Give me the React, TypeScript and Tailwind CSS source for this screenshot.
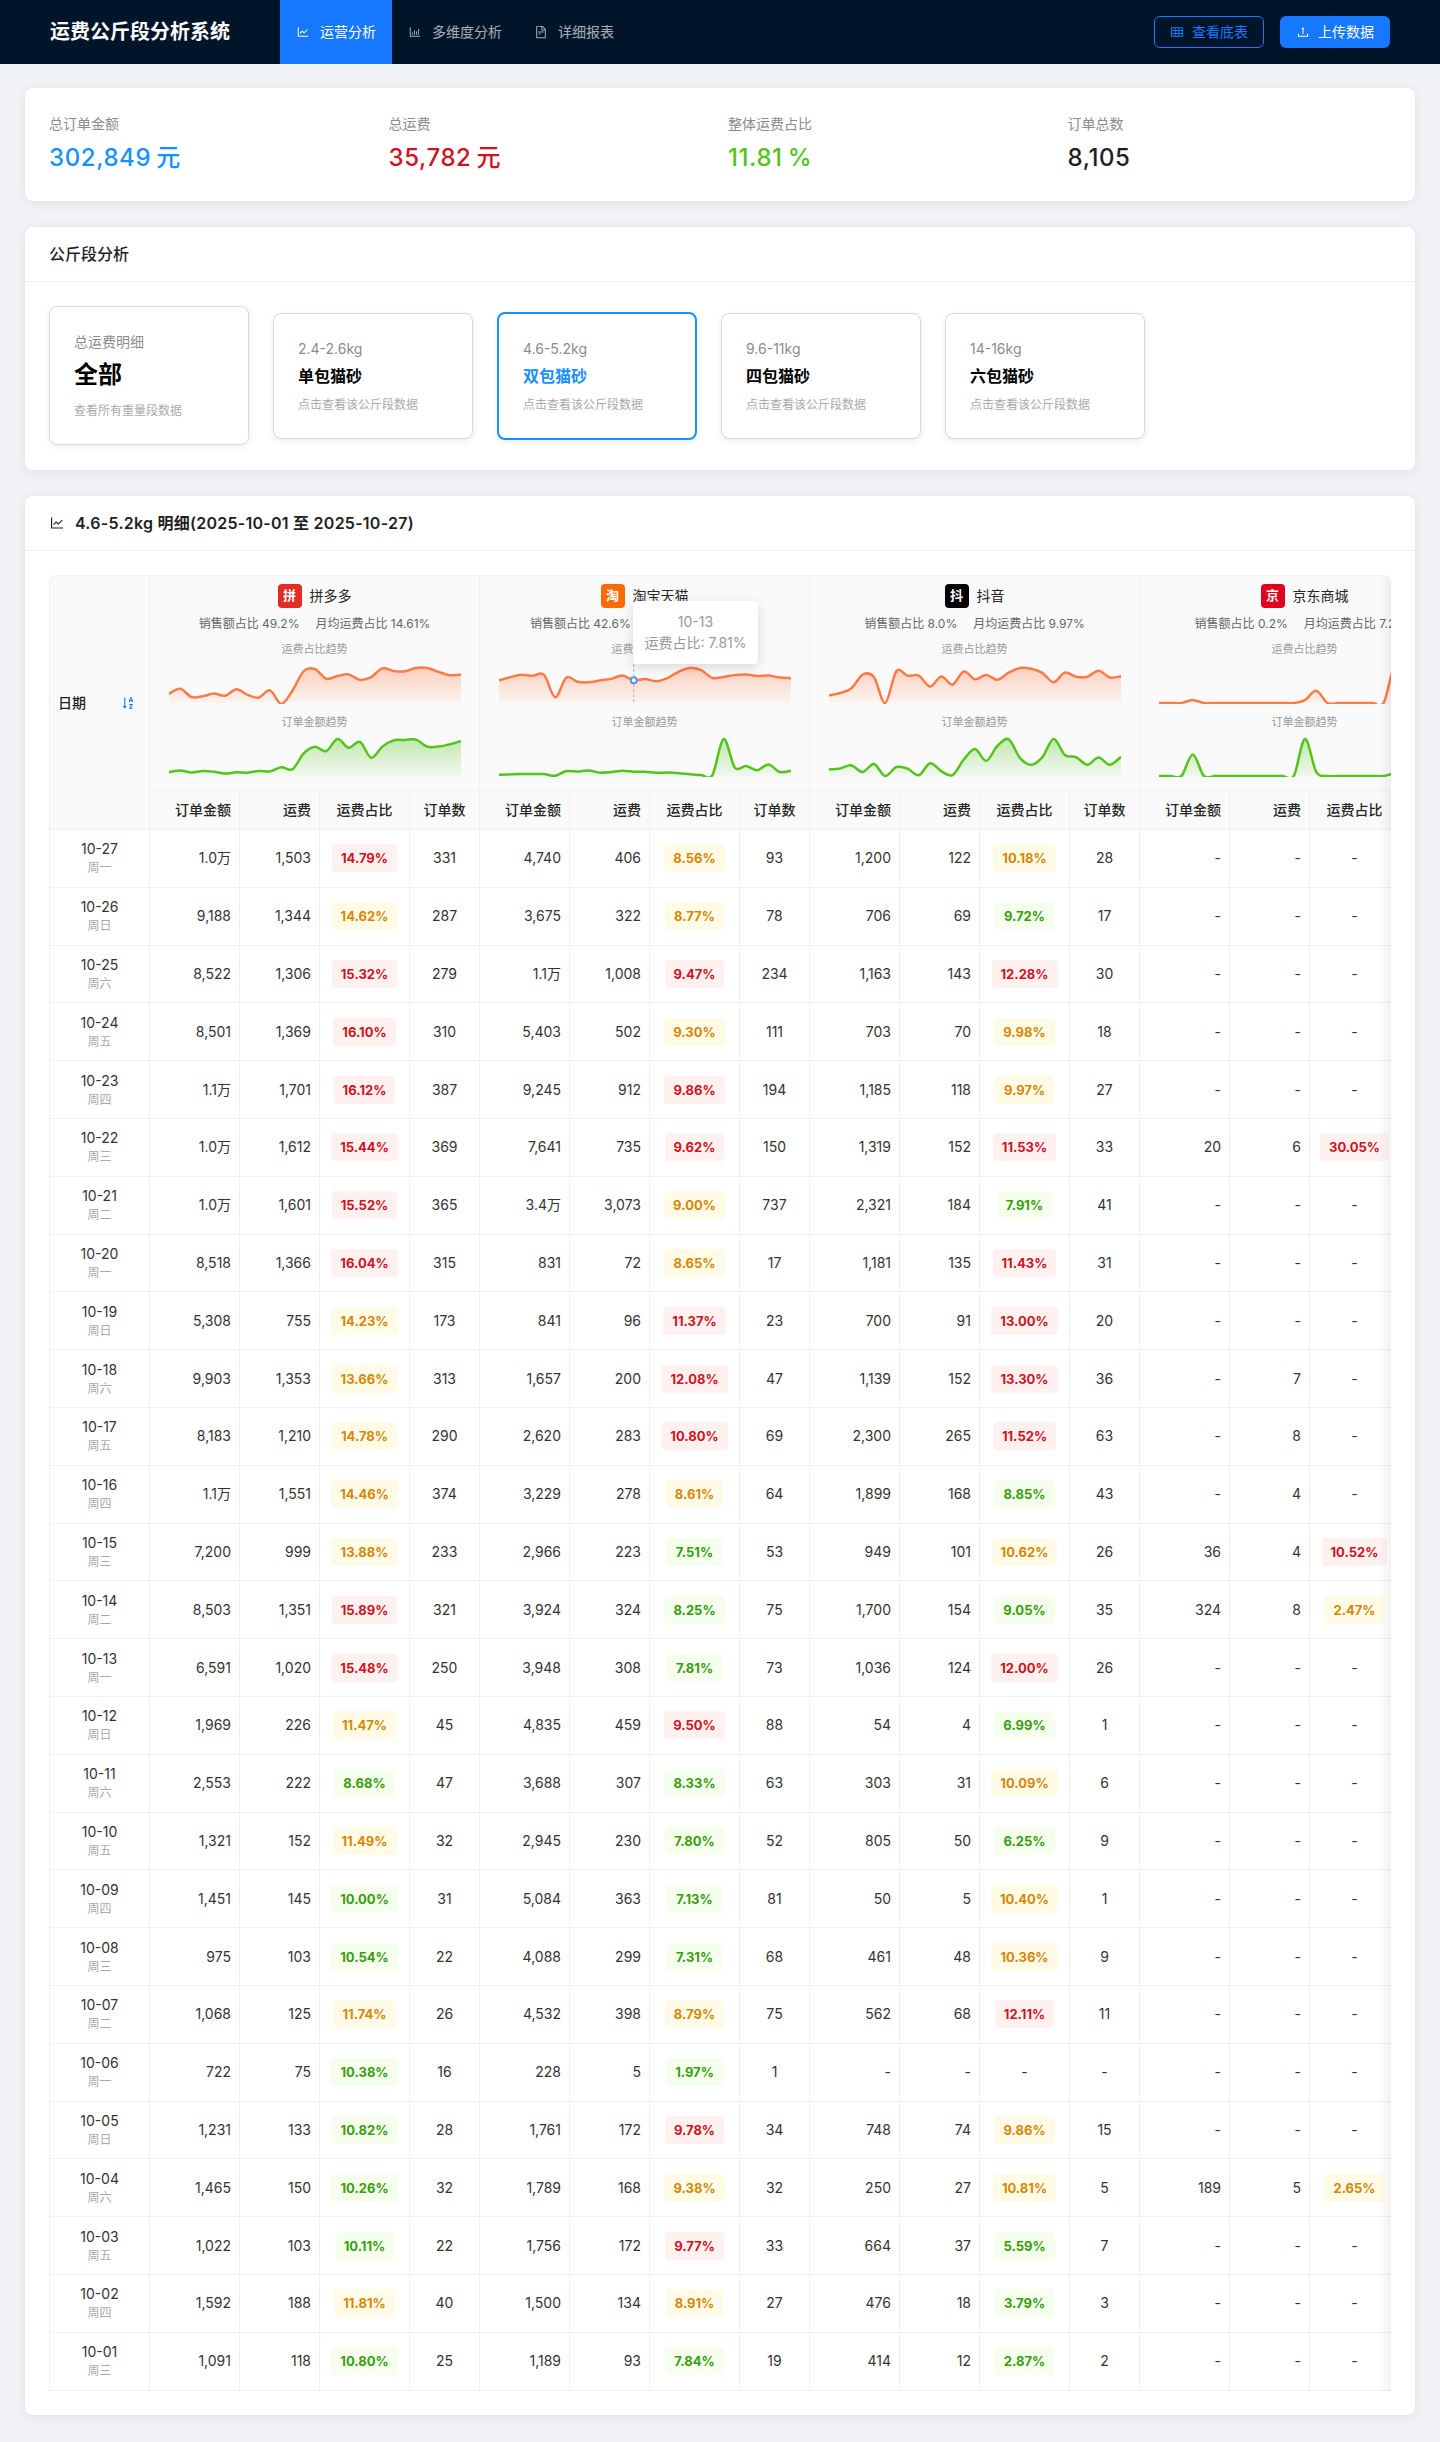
import {
  AiOutlineBarChart,
  AiOutlineFileText,
  AiOutlineLineChart,
  AiOutlineSortAscending,
  AiOutlineTable,
  AiOutlineUpload,
} from 'react-icons/ai'

type Cell = [number | null, number | null, number | null, number | null]
type Row = { date: string; week: string; cells: [Cell, Cell, Cell, Cell] }

const NONE: Cell = [null, null, null, null]

const rows: Row[] = [
  { date: '10-27', week: '周一', cells: [[10162, 1503, 14.79, 331], [4740, 406, 8.56, 93], [1200, 122, 10.18, 28], NONE] },
  { date: '10-26', week: '周日', cells: [[9188, 1344, 14.62, 287], [3675, 322, 8.77, 78], [706, 69, 9.72, 17], NONE] },
  { date: '10-25', week: '周六', cells: [[8522, 1306, 15.32, 279], [10644, 1008, 9.47, 234], [1163, 143, 12.28, 30], NONE] },
  { date: '10-24', week: '周五', cells: [[8501, 1369, 16.1, 310], [5403, 502, 9.3, 111], [703, 70, 9.98, 18], NONE] },
  { date: '10-23', week: '周四', cells: [[10552, 1701, 16.12, 387], [9245, 912, 9.86, 194], [1185, 118, 9.97, 27], NONE] },
  { date: '10-22', week: '周三', cells: [[10440, 1612, 15.44, 369], [7641, 735, 9.62, 150], [1319, 152, 11.53, 33], [20, 6, 30.05, null]] },
  { date: '10-21', week: '周二', cells: [[10316, 1601, 15.52, 365], [34144, 3073, 9.0, 737], [2321, 184, 7.91, 41], NONE] },
  { date: '10-20', week: '周一', cells: [[8518, 1366, 16.04, 315], [831, 72, 8.65, 17], [1181, 135, 11.43, 31], NONE] },
  { date: '10-19', week: '周日', cells: [[5308, 755, 14.23, 173], [841, 96, 11.37, 23], [700, 91, 13.0, 20], NONE] },
  { date: '10-18', week: '周六', cells: [[9903, 1353, 13.66, 313], [1657, 200, 12.08, 47], [1139, 152, 13.3, 36], [null, 7, null, null]] },
  { date: '10-17', week: '周五', cells: [[8183, 1210, 14.78, 290], [2620, 283, 10.8, 69], [2300, 265, 11.52, 63], [null, 8, null, null]] },
  { date: '10-16', week: '周四', cells: [[10726, 1551, 14.46, 374], [3229, 278, 8.61, 64], [1899, 168, 8.85, 43], [null, 4, null, null]] },
  { date: '10-15', week: '周三', cells: [[7200, 999, 13.88, 233], [2966, 223, 7.51, 53], [949, 101, 10.62, 26], [36, 4, 10.52, null]] },
  { date: '10-14', week: '周二', cells: [[8503, 1351, 15.89, 321], [3924, 324, 8.25, 75], [1700, 154, 9.05, 35], [324, 8, 2.47, null]] },
  { date: '10-13', week: '周一', cells: [[6591, 1020, 15.48, 250], [3948, 308, 7.81, 73], [1036, 124, 12.0, 26], NONE] },
  { date: '10-12', week: '周日', cells: [[1969, 226, 11.47, 45], [4835, 459, 9.5, 88], [54, 4, 6.99, 1], NONE] },
  { date: '10-11', week: '周六', cells: [[2553, 222, 8.68, 47], [3688, 307, 8.33, 63], [303, 31, 10.09, 6], NONE] },
  { date: '10-10', week: '周五', cells: [[1321, 152, 11.49, 32], [2945, 230, 7.8, 52], [805, 50, 6.25, 9], NONE] },
  { date: '10-09', week: '周四', cells: [[1451, 145, 10.0, 31], [5084, 363, 7.13, 81], [50, 5, 10.4, 1], NONE] },
  { date: '10-08', week: '周三', cells: [[975, 103, 10.54, 22], [4088, 299, 7.31, 68], [461, 48, 10.36, 9], NONE] },
  { date: '10-07', week: '周二', cells: [[1068, 125, 11.74, 26], [4532, 398, 8.79, 75], [562, 68, 12.11, 11], NONE] },
  { date: '10-06', week: '周一', cells: [[722, 75, 10.38, 16], [228, 5, 1.97, 1], NONE, NONE] },
  { date: '10-05', week: '周日', cells: [[1231, 133, 10.82, 28], [1761, 172, 9.78, 34], [748, 74, 9.86, 15], NONE] },
  { date: '10-04', week: '周六', cells: [[1465, 150, 10.26, 32], [1789, 168, 9.38, 32], [250, 27, 10.81, 5], [189, 5, 2.65, null]] },
  { date: '10-03', week: '周五', cells: [[1022, 103, 10.11, 22], [1756, 172, 9.77, 33], [664, 37, 5.59, 7], NONE] },
  { date: '10-02', week: '周四', cells: [[1592, 188, 11.81, 40], [1500, 134, 8.91, 27], [476, 18, 3.79, 3], NONE] },
  { date: '10-01', week: '周三', cells: [[1091, 118, 10.8, 25], [1189, 93, 7.84, 19], [414, 12, 2.87, 2], NONE] },
]

const platforms = [
  { name: '拼多多', mark: '拼', logo: 'bg-[#e02e24]', share: '49.2%', avg: '14.61%', rateFloor: 8.87, low: 11, high: 14.79 },
  { name: '淘宝天猫', mark: '淘', logo: 'bg-[#ff6a00]', share: '42.6%', avg: '8.63%', rateFloor: 0, low: 8.5, high: 9.47 },
  { name: '抖音', mark: '抖', logo: 'bg-black', share: '8.0%', avg: '9.97%', rateFloor: 0, low: 9.8, high: 11.43 },
  { name: '京东商城', mark: '京', logo: 'bg-[#e1001f]', share: '0.2%', avg: '7.28%', rateFloor: 0, low: 2, high: 10 },
]

const segments = [
  { range: '2.4-2.6kg', name: '单包猫砂' },
  { range: '4.6-5.2kg', name: '双包猫砂', active: true },
  { range: '9.6-11kg', name: '四包猫砂' },
  { range: '14-16kg', name: '六包猫砂' },
]

const stats = [
  { label: '总订单金额', value: '302,849', suffix: '元', color: 'text-[#1890ff]' },
  { label: '总运费', value: '35,782', suffix: '元', color: 'text-[#cf1322]' },
  { label: '整体运费占比', value: '11.81', suffix: '%', color: 'text-[#52c41a]' },
  { label: '订单总数', value: '8,105', suffix: '', color: 'text-[#1f1f1f]' },
]

const money = (n: number | null) => {
  if (n == null) return '-'
  if (n >= 10000) return (n / 10000).toFixed(1) + '万'
  return n.toLocaleString('en-US')
}

function smoothPath(points: number[][]) {
  let d = `M${points[0][0]},${points[0][1]}`
  for (let i = 0; i < points.length - 1; i++) {
    const p0 = points[i - 1] ?? points[i]
    const p1 = points[i]
    const p2 = points[i + 1]
    const p3 = points[i + 2] ?? p2
    const c1x = p1[0] + (p2[0] - p0[0]) / 6
    const c1y = p1[1] + (p2[1] - p0[1]) / 6
    const c2x = p2[0] - (p3[0] - p1[0]) / 6
    const c2y = p2[1] - (p3[1] - p1[1]) / 6
    d += ` C${c1x},${c1y} ${c2x},${c2y} ${p2[0]},${p2[1]}`
  }
  return d
}

function Spark({
  id,
  values,
  floor,
  top,
  color,
  hover,
}: {
  id: string
  values: number[]
  floor: number
  top: number
  color: string
  hover?: number
}) {
  const base = 39
  const max = Math.max(...values)
  const x = (i: number) => (i * 292) / (values.length - 1)
  const y = (v: number) => base - ((v - floor) / (max - floor)) * (base - top)
  const points = values.map((v, i) => [x(i), y(v)])
  const line = smoothPath(points)
  return (
    <svg width="292" height="40" className="block">
      <defs>
        <linearGradient id={id} x1="0" y1="0" x2="0" y2="1">
          <stop offset="0%" stopColor={color} stopOpacity="0.34" />
          <stop offset="100%" stopColor={color} stopOpacity="0.04" />
        </linearGradient>
      </defs>
      <path d={`${line} L292,${base} L0,${base} Z`} fill={`url(#${id})`} />
      <path d={line} fill="none" stroke={color} strokeWidth="2.5" />
      {hover != null && (
        <>
          <line x1={x(hover)} x2={x(hover)} y1="0" y2={base} stroke="#b0b0b0" strokeWidth="1" strokeDasharray="3 2" />
          <circle cx={x(hover)} cy={y(values[hover])} r="3" fill="#fff" stroke="#5b8ff9" strokeWidth="2" />
        </>
      )}
    </svg>
  )
}

function RateBadge({ rate, low, high }: { rate: number; low: number; high: number }) {
  const tone =
    rate >= high
      ? 'bg-[#fff1f0] text-[#cf1322]'
      : rate >= low
        ? 'bg-[#fffbe6] text-[#d48806]'
        : 'bg-[#f6ffed] text-[#389e0d]'
  return (
    <span className={'inline-block h-7 rounded px-[9px] text-[13px] leading-7 font-bold whitespace-nowrap ' + tone}>
      {rate.toFixed(2)}%
    </span>
  )
}

function PlatformHead({ index }: { index: number }) {
  const p = platforms[index]
  const asc = [...rows].reverse()
  const rates = asc.map((r) => r.cells[index][2] ?? 0)
  const amounts = asc.map((r) => r.cells[index][0] ?? 0)
  return (
    <div className="flex h-[214px] flex-col items-center pt-2 font-normal">
      <div className="flex h-6 items-center gap-2">
        <span className={'flex h-6 w-6 items-center justify-center rounded text-[13px] font-bold text-white ' + p.logo}>
          {p.mark}
        </span>
        <span className="text-sm text-[#262626]">{p.name}</span>
      </div>
      <div className="mt-[6px] flex h-[19px] gap-4 text-xs leading-[19px] whitespace-nowrap text-[#666]">
        <span>销售额占比 {p.share}</span>
        <span>月均运费占比 {p.avg}</span>
      </div>
      <div className="mt-[8px] h-[17px] text-[11px] leading-[17px] text-[#999]">运费占比趋势</div>
      <div className="mt-[6px]">
        <Spark
          id={'rate' + index}
          values={rates}
          floor={p.rateFloor}
          top={4}
          color="#ff7a45"
          hover={index === 1 ? 12 : undefined}
        />
      </div>
      <div className="mt-[10px] h-[17px] text-[11px] leading-[17px] text-[#999]">订单金额趋势</div>
      <div className="mt-[6px]">
        <Spark id={'amount' + index} values={amounts} floor={0} top={2} color="#52c41a" />
      </div>
    </div>
  )
}

const th = 'border-r border-b border-[#f0f0f0] bg-[#fafafa] '
const td = 'border-r border-b border-[#f0f0f0] px-2 text-sm text-[#333] '

export default function App() {
  return (
    <div className="h-[2442px] overflow-hidden bg-[#f0f2f5] font-[Inter,'Noto_Sans_CJK_SC',sans-serif] antialiased">
      <header className="flex h-16 items-center bg-[#001529] px-[50px]">
        <h1 className="mr-[50px] text-xl font-semibold text-white">运费公斤段分析系统</h1>
        <nav className="flex h-full text-sm">
          <a className="flex items-center gap-[10px] bg-[#1677ff] px-4 text-white">
            <AiOutlineLineChart size={14} />
            运营分析
          </a>
          <a className="flex items-center gap-[10px] px-4 text-white/65">
            <AiOutlineBarChart size={14} />
            多维度分析
          </a>
          <a className="flex items-center gap-[10px] px-4 text-white/65">
            <AiOutlineFileText size={14} />
            详细报表
          </a>
        </nav>
        <div className="ml-auto flex gap-4 text-sm">
          <button className="flex h-8 w-[110px] items-center justify-center gap-2 rounded-md border border-[#1677ff] text-[#1677ff]">
            <AiOutlineTable size={14} />
            查看底表
          </button>
          <button className="flex h-8 w-[110px] items-center justify-center gap-2 rounded-md bg-[#1677ff] text-white">
            <AiOutlineUpload size={14} />
            上传数据
          </button>
        </div>
      </header>

      <main className="flex flex-col gap-[26px] px-[25px] pt-6">
        <section className="grid h-[113px] grid-cols-4 gap-4 rounded-lg bg-white px-6 pt-[25px] shadow-[0_2px_12px_rgba(0,0,0,0.08)]">
          {stats.map((s) => (
            <div key={s.label}>
              <div className="text-sm leading-[22px] text-[#8c8c8c]">{s.label}</div>
              <div className={'mt-[5px] text-2xl leading-9 font-medium tracking-[0.6px] ' + s.color}>
                {s.value}
                {s.suffix && <span className="ml-[5px]">{s.suffix}</span>}
              </div>
            </div>
          ))}
        </section>

        <section className="rounded-lg bg-white shadow-[0_2px_12px_rgba(0,0,0,0.08)]">
          <div className="flex h-[55px] items-center border-b border-[#f0f0f0] px-6 text-base font-medium text-[#1f1f1f]">
            公斤段分析
          </div>
          <div className="flex items-center gap-6 px-6 pt-6 pb-[25px]">
            <div className="h-[139px] w-[200px] rounded-lg border border-[#d9d9d9] p-6 shadow-[0_2px_6px_rgba(0,0,0,0.08)]">
              <div className="text-sm leading-[22px] text-[#8c8c8c]">总运费明细</div>
              <div className="mt-[6px] text-2xl leading-8 font-bold text-black">全部</div>
              <div className="mt-[10px] text-xs leading-[19px] text-[#aaa]">查看所有重量段数据</div>
            </div>
            {segments.map((s) => (
              <div
                key={s.range}
                className={
                  'w-[200px] rounded-lg bg-white p-6 shadow-[0_2px_6px_rgba(0,0,0,0.08)] ' +
                  (s.active ? 'border-2 border-[#1890ff]' : 'border border-[#d9d9d9]')
                }
              >
                <div className="text-sm leading-[22px] text-[#8c8c8c]">{s.range}</div>
                <div className={'mt-1 text-base leading-6 font-bold ' + (s.active ? 'text-[#1890ff]' : 'text-black')}>
                  {s.name}
                </div>
                <div className="mt-[7px] text-xs leading-[19px] text-[#aaa]">点击查看该公斤段数据</div>
              </div>
            ))}
          </div>
        </section>

        <section className="rounded-lg bg-white shadow-[0_2px_12px_rgba(0,0,0,0.08)]">
          <div className="flex h-[55px] items-center gap-[10px] border-b border-[#f0f0f0] px-6 text-base font-semibold tracking-[0.25px] text-[#1f1f1f]">
            <AiOutlineLineChart size={16} />
            4.6-5.2kg 明细(2025-10-01 至 2025-10-27)
          </div>
          <div className="p-6">
            <div className="relative overflow-hidden rounded-t-lg border-t border-l border-[#f0f0f0]">
              <table className="w-[1420px] table-fixed border-separate border-spacing-0">
                <colgroup>
                  <col className="w-[100px]" />
                  {platforms.map((p) => [
                    <col key={p.name + 'a'} className="w-[90px]" />,
                    <col key={p.name + 'b'} className="w-[80px]" />,
                    <col key={p.name + 'c'} className="w-[90px]" />,
                    <col key={p.name + 'd'} className="w-[70px]" />,
                  ])}
                </colgroup>
                <thead>
                  <tr className="h-[215px]">
                    <th rowSpan={2} className={th + 'px-2 text-left text-sm font-medium text-[#1f1f1f]'}>
                      <div className="flex items-center justify-between pr-[5px]">
                        日期
                        <AiOutlineSortAscending size={16} className="text-[#1677ff]" />
                      </div>
                    </th>
                    {platforms.map((p, i) => (
                      <th key={p.name} colSpan={4} className={th + 'align-top'}>
                        <PlatformHead index={i} />
                      </th>
                    ))}
                  </tr>
                  <tr className="h-[39px]">
                    {platforms.map((p) => [
                      <th key={p.name + 'a'} className={th + 'px-2 text-right text-sm font-medium text-[#262626]'}>订单金额</th>,
                      <th key={p.name + 'b'} className={th + 'px-2 text-right text-sm font-medium text-[#262626]'}>运费</th>,
                      <th key={p.name + 'c'} className={th + 'px-2 text-center text-sm font-medium text-[#262626]'}>运费占比</th>,
                      <th key={p.name + 'd'} className={th + 'px-2 text-center text-sm font-medium text-[#262626]'}>订单数</th>,
                    ])}
                  </tr>
                </thead>
                <tbody>
                  {rows.map((r) => (
                    <tr key={r.date} className="h-[57.8px]">
                      <td className={td + 'text-center'}>
                        <div className="leading-[19px]">{r.date}</div>
                        <div className="text-xs leading-[19px] text-[#aaa]">{r.week}</div>
                      </td>
                      {r.cells.map((c, i) => [
                        <td key={i + 'a'} className={td + 'text-right'}>{money(c[0])}</td>,
                        <td key={i + 'b'} className={td + 'text-right'}>{money(c[1])}</td>,
                        <td key={i + 'c'} className={td + 'text-center'}>
                          {c[2] == null ? '-' : <RateBadge rate={c[2]} low={platforms[i].low} high={platforms[i].high} />}
                        </td>,
                        <td key={i + 'd'} className={td + 'text-center'}>{c[3] ?? '-'}</td>,
                      ])}
                    </tr>
                  ))}
                </tbody>
              </table>
              <div className="absolute top-[25px] left-[583px] flex h-[63px] w-[125px] flex-col items-center justify-center gap-[3px] rounded bg-white text-sm leading-[18px] whitespace-nowrap text-[#999] shadow-[0_3px_12px_rgba(0,0,0,0.14)]">
                <div>10-13</div>
                <div>运费占比: 7.81%</div>
              </div>
              <div className="absolute top-0 right-0 bottom-0 w-3 bg-gradient-to-r from-transparent to-black/5" />
            </div>
          </div>
        </section>
      </main>
    </div>
  )
}
